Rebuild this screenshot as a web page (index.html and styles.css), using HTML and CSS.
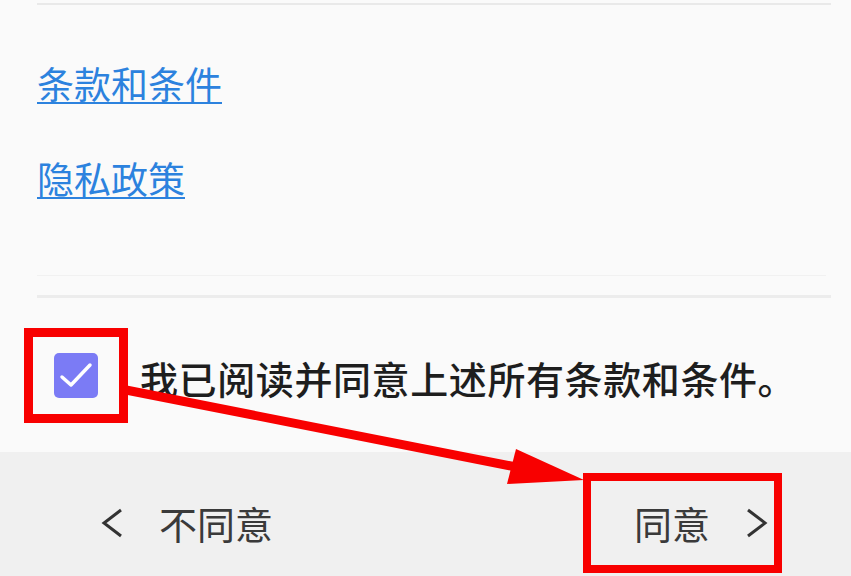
FILE: index.html
```html
<!DOCTYPE html>
<html lang="zh-CN">
<head>
<meta charset="utf-8">
<title>条款和条件</title>
<link rel="stylesheet" href="styles.css">
</head>
<body>
<div class="page">
  <div class="content">
    <div class="rule rule-top"></div>
    <a class="link link-first" href="#">条款和条件</a>
    <a class="link link-second" href="#">隐私政策</a>
    <div class="rule rule-faint"></div>
    <div class="rule rule-main"></div>
    <div class="agree-row">
      <div class="mark-box">
        <span class="checkbox">
          <svg width="44" height="45" viewBox="0 0 44 45"><polyline points="8,24 17,32 36,12" fill="none" stroke="#fff" stroke-width="3.5" stroke-linecap="round" stroke-linejoin="round"/></svg>
        </span>
      </div>
      <span class="agree-text">我已阅读并同意上述所有条款和条件。</span>
    </div>
  </div>
  <div class="footer">
    <button class="nav nav-back">
      <svg class="chev" width="22" height="30" viewBox="0 0 22 30"><polyline points="20,2 3,15 20,28" fill="none" stroke="#333" stroke-width="3"/></svg>
      <span>不同意</span>
    </button>
    <button class="nav nav-next">
      <span>同意</span>
      <svg class="chev" width="22" height="30" viewBox="0 0 22 30"><polyline points="2,2 19,15 2,28" fill="none" stroke="#333" stroke-width="3"/></svg>
    </button>
  </div>
  <svg class="arrow" width="851" height="576" viewBox="0 0 851 576">
    <line x1="126" y1="390" x2="516" y2="467" stroke="#f80000" stroke-width="9"/>
    <polygon points="584,480 507,484 516,449" fill="#f80000"/>
  </svg>
</div>
</body>
</html>
```

FILE: styles.css
```css
html, body {
  margin: 0;
  padding: 0;
}
body {
  background: #fafafa;
  font-family: "Noto Sans CJK SC", "Noto Sans", sans-serif;
}
.page {
  position: relative;
  width: 851px;
  height: 576px;
  overflow: hidden;
  display: flex;
  flex-direction: column;
}
.content {
  flex: 1;
  display: flex;
  flex-direction: column;
  align-items: flex-start;
  padding: 0 20px 0 37px;
}
.rule {
  align-self: stretch;
  height: 2px;
  background: #e9e9e9;
}
.rule-top {
  margin-top: 3px;
}
.rule-faint {
  height: 1px;
  background: #f1f1f1;
  margin-top: 75px;
  margin-right: 5px;
}
.rule-main {
  height: 3px;
  margin-top: 19px;
  background: #ececec;
}
.link {
  display: block;
  font-size: 37px;
  line-height: 44px;
  color: #2c82de;
  text-decoration: underline;
  text-decoration-thickness: 2px;
  text-underline-offset: 3px;
}
.link-first {
  margin-top: 56px;
}
.link-second {
  margin-top: 51px;
}
.agree-row {
  display: flex;
  align-items: center;
  margin-top: 30px;
  margin-left: -13px;
  gap: 12px;
}
.mark-box {
  width: 86px;
  height: 77px;
  border: 9px solid #f80000;
  display: flex;
  align-items: center;
  justify-content: center;
}
.checkbox {
  width: 44px;
  height: 45px;
  border-radius: 5px;
  background: #7b7bf5;
  display: flex;
}
.agree-text {
  font-size: 38px;
  line-height: 44px;
  letter-spacing: 0.6px;
  font-weight: 500;
  color: #1e1e1e;
  padding-top: 4px;
}
.footer {
  height: 124px;
  box-sizing: border-box;
  background: #f0f0f0;
  display: flex;
  justify-content: space-between;
  align-items: flex-start;
  padding: 21px 69px 0 101px;
}
.nav {
  display: flex;
  align-items: center;
  gap: 36px;
  height: 100px;
  box-sizing: border-box;
  padding: 0;
  border: 0;
  background: transparent;
  font-family: "Noto Sans CJK SC", "Noto Sans", sans-serif;
  font-size: 38px;
  color: #3a3a3a;
}
.nav span {
  line-height: 44px;
}
.nav-next {
  width: 199px;
  border: 8px solid #f80000;
  justify-content: flex-end;
  padding-right: 6px;
}
.chev {
  display: block;
}
.arrow {
  position: absolute;
  left: 0;
  top: 0;
  pointer-events: none;
}
```
